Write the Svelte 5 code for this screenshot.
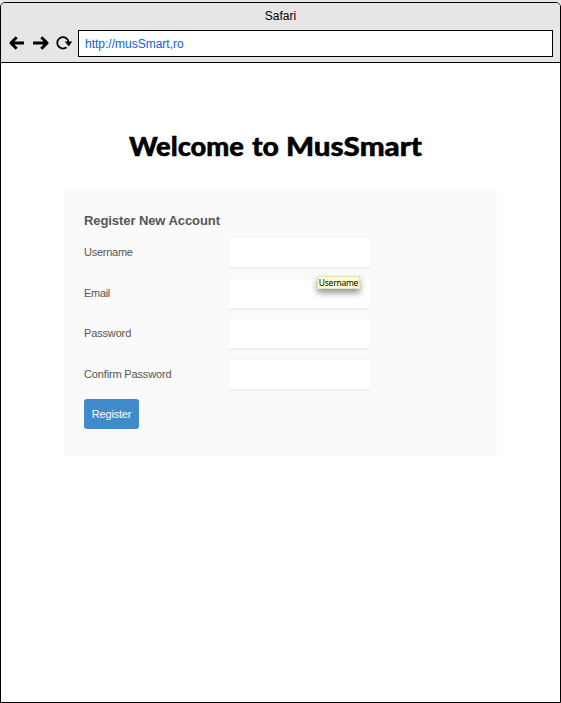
<script>
  const fields = [
    { id: 'username', label: 'Username', type: 'text', spacing: '-0.25px' },
    { id: 'email', label: 'Email', type: 'email', spacing: '-0.3px' },
    { id: 'password', label: 'Password', type: 'password', spacing: '-0.15px' },
    { id: 'confirm', label: 'Confirm Password', type: 'password', spacing: '-0.15px' }
  ];
</script>

<div class="page">
  <div class="window">
    <header>
      <div class="title">Safari</div>
      <div class="toolbar">
        <svg class="nav" width="70" height="20" viewBox="0 0 70 20" fill="none" stroke="#000">
          <path d="M18 10H5M10.7 4.2L4.9 10L10.7 15.8" stroke-width="3" stroke-linejoin="round" />
          <path d="M27 10H41M35.3 4.2L41.1 10L35.3 15.8" stroke-width="3" stroke-linejoin="round" />
          <path d="M60.5 14.3A5.7 5.7 0 1 1 62.6 9.2" stroke-width="1.8" />
          <path d="M58.8 8.6H66.2L62.8 13.4Z" fill="#000" stroke="none" />
        </svg>
        <div class="address">http://musSmart,ro</div>
      </div>
    </header>
    <main>
      <h1>
        <svg width="300" height="40" viewBox="0 0 300 40">
          <text x="1" y="27" textLength="115" lengthAdjust="spacingAndGlyphs">Welcome</text>
          <text x="124" y="27" textLength="27" lengthAdjust="spacingAndGlyphs">to</text>
          <text x="158" y="27" textLength="136" lengthAdjust="spacingAndGlyphs">MusSmart</text>
        </svg>
      </h1>
      <form onsubmit={(e) => e.preventDefault()}>
        <h2>Register New Account</h2>
        {#each fields as field, i}
          <div class="row">
            <label for={field.id} style:letter-spacing={field.spacing}>{field.label}</label>
            <div class="control">
              <input id={field.id} type={field.type} />
              {#if i === 1}<span class="tip">Username</span>{/if}
            </div>
          </div>
        {/each}
        <button>Register</button>
      </form>
    </main>
  </div>
</div>

<style>
  :global(body) { background: #e6e6e6; }
  .page {
    box-sizing: border-box;
    height: 703px;
    padding-top: 2px;
    font-family: "Liberation Sans", Arial, sans-serif;
  }
  .window {
    box-sizing: border-box;
    height: 701px;
    border: 1px solid #000;
    border-radius: 5px 5px 0 0;
    background: #fff;
    overflow: hidden;
  }
  header {
    box-sizing: border-box;
    height: 60px;
    background: #e6e6e6;
    border-bottom: 1px solid #000;
  }
  .title {
    height: 27px;
    line-height: 27px;
    text-align: center;
    font-size: 12px;
  }
  .toolbar {
    display: flex;
    padding: 0 7px 0 5px;
  }
  .nav { margin: 3px 2px 0 0; flex: none; }
  .address {
    box-sizing: border-box;
    flex: 1;
    height: 27px;
    border: 1px solid #000;
    background: #fff;
    color: #0b61dc;
    font-size: 12px;
    line-height: 26px;
    padding-left: 6px;
  }
  main {
    display: flex;
    flex-direction: column;
    align-items: flex-start;
    padding: 66px 0 0 63px;
  }
  h1 { margin: 0 0 20px 64px; height: 40px; }
  h1 svg { display: block; overflow: visible; }
  h1 text {
    font: 900 27px Lato, sans-serif;
    fill: #000;
    stroke: #000;
    stroke-width: 0.5px;
  }
  form {
    box-sizing: border-box;
    width: 433px;
    height: 267px;
    padding: 21px 20px 0;
    background: #fafafa;
    color: #555;
  }
  h2 {
    margin: 0 0 6px;
    font-size: 13px;
    line-height: 21px;
    letter-spacing: -0.08px;
    white-space: nowrap;
  }
  .row {
    display: flex;
    height: 40.5px;
  }
  label {
    width: 144px;
    font-size: 11px;
    line-height: 31px;
  }
  .control { position: relative; height: 32px; }
  input {
    display: block;
    box-sizing: border-box;
    width: 143px;
    height: 32px;
    border: 1px solid #f6f6f6;
    border-bottom: 2px solid #f1f1f1;
    border-radius: 1px;
    background: #fff;
    outline: none;
  }
  .tip {
    position: absolute;
    left: 89px;
    top: -2px;
    box-sizing: border-box;
    width: 43px;
    height: 13px;
    border: 1px solid #e4e4b8;
    background: #ffffc9;
    color: #000;
    font: 8.5px/11px "Noto Sans", sans-serif;
    letter-spacing: -0.25px;
    text-align: center;
    box-shadow: 0 4px 6px rgba(0, 0, 0, 0.42);
  }
  button {
    display: block;
    width: 55px;
    height: 30px;
    padding: 0;
    border: 0;
    border-radius: 3px;
    background: #428bca;
    color: #fff;
    font: 11px "Liberation Sans", Arial, sans-serif;
    letter-spacing: -0.2px;
  }
</style>
